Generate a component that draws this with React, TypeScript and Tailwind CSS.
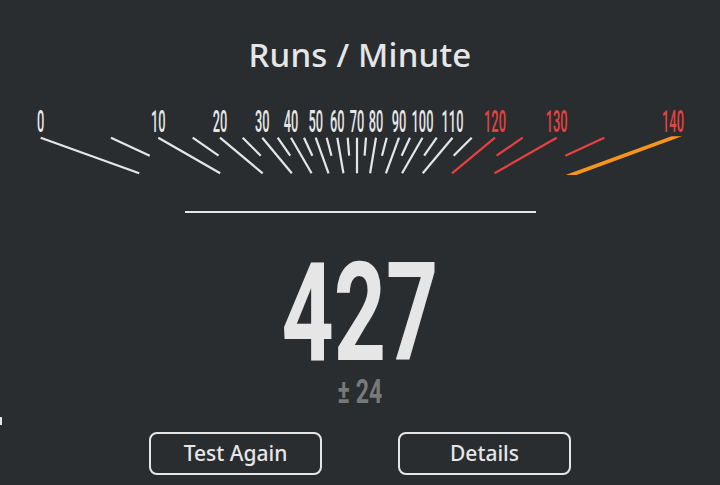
import React from "react";

const CX = 357;
const TOP = 37.7;
const LONG = 0.3115;
const SHORT = 0.1575;
const WHITE = "#e6e6e6";
const RED = "#e8413f";

type Tick = { x: number; long: boolean; red: boolean; label?: string };

const ticks: Tick[] = [
  { x: 40.7, long: true, red: false, label: "0" },
  { x: 111, long: false, red: false },
  { x: 158.3, long: true, red: false, label: "10" },
  { x: 192.7, long: false, red: false },
  { x: 220, long: true, red: false, label: "20" },
  { x: 242.7, long: false, red: false },
  { x: 262.3, long: true, red: false, label: "30" },
  { x: 277.7, long: false, red: false },
  { x: 291, long: true, red: false, label: "40" },
  { x: 304, long: false, red: false },
  { x: 315.7, long: true, red: false, label: "50" },
  { x: 326.7, long: false, red: false },
  { x: 337.3, long: true, red: false, label: "60" },
  { x: 347.7, long: false, red: false },
  { x: 357, long: true, red: false, label: "70" },
  { x: 366, long: false, red: false },
  { x: 376, long: true, red: false, label: "80" },
  { x: 386.7, long: false, red: false },
  { x: 399, long: true, red: false, label: "90" },
  { x: 410, long: false, red: false },
  { x: 422.5, long: true, red: false, label: "100" },
  { x: 436.7, long: false, red: false },
  { x: 452.5, long: true, red: false, label: "110" },
  { x: 471.7, long: false, red: false },
  { x: 495, long: true, red: true, label: "120" },
  { x: 522.7, long: false, red: true },
  { x: 556.7, long: true, red: true, label: "130" },
  { x: 604.3, long: false, red: true },
];

function Gauge() {
  return (
    <svg width="720" height="85" viewBox="0 0 720 85" className="block">
      {ticks.map((t, i) => {
        const f = t.long ? LONG : SHORT;
        const bx = t.x + (CX - t.x) * f;
        const by = TOP + (t.long ? 35.6 : 18);
        return (
          <line
            key={i}
            x1={t.x}
            y1={TOP}
            x2={bx}
            y2={by}
            stroke={t.red ? RED : WHITE}
            strokeWidth={2.2}
          />
        );
      })}
      {ticks
        .filter((t) => t.label)
        .map((t, i) => (
          <text
            key={"l" + i}
            transform={`translate(${t.x} 31.5) scale(0.4 1)`}
            textAnchor="middle"
            fontFamily="Roboto, sans-serif"
            fontSize="32"
            fontWeight="500"
            fill={t.red ? RED : WHITE}
          >
            {t.label}
          </text>
        ))}
      <text
        transform="translate(673 31.5) scale(0.4 1)"
        textAnchor="middle"
        fontFamily="Roboto, sans-serif"
        fontSize="32"
        fontWeight="500"
        fill={RED}
      >
        140
      </text>
      <polygon
        points="671.5,36.3 682,36.3 576.5,75 565.5,75"
        fill="#f7941d"
      />
    </svg>
  );
}

export default function App() {
  return (
    <div className="relative w-[720px] h-[485px] bg-[#292d30] flex flex-col items-center overflow-hidden">
      <div className="absolute left-0 top-[417px] w-[2px] h-[8px] bg-[#e6e6e6]" />
      <h1 className="mt-[33px] h-[44px] text-[33px] leading-[44px] font-medium text-[#e6e6e6] [font-family:'Noto_Sans',sans-serif] tracking-[0.2px]">
        Runs / Minute
      </h1>
      <div className="mt-[23px]">
        <Gauge />
      </div>
      <div className="mt-[26px] w-[351px] h-[2px] bg-[#e6e6e6]" />
      <div className="mt-[48px] h-[104px] flex items-start justify-center">
        <span className="inline-block text-[138px] leading-[104px] font-bold text-[#e6e6e6] [font-family:Roboto,sans-serif] scale-x-[0.66] origin-center">
          427
        </span>
      </div>
      <div className="mt-[11px] h-[30px] flex items-start justify-center">
        <span className="inline-block text-[34px] leading-[30px] font-bold text-[#777a7c] [font-family:Roboto,sans-serif] scale-x-[0.68] origin-center">
          ± 24
        </span>
      </div>
      <div className="mt-[26px] flex gap-[76px]">
        <button className="w-[173px] h-[43px] border-2 border-[#e6e6e6] rounded-[8px] text-[21px] font-medium text-[#e6e6e6] [font-family:'Noto_Sans',sans-serif] flex items-center justify-center">
          Test Again
        </button>
        <button className="w-[173px] h-[43px] border-2 border-[#e6e6e6] rounded-[8px] text-[21px] font-medium text-[#e6e6e6] [font-family:'Noto_Sans',sans-serif] flex items-center justify-center">
          Details
        </button>
      </div>
    </div>
  );
}
